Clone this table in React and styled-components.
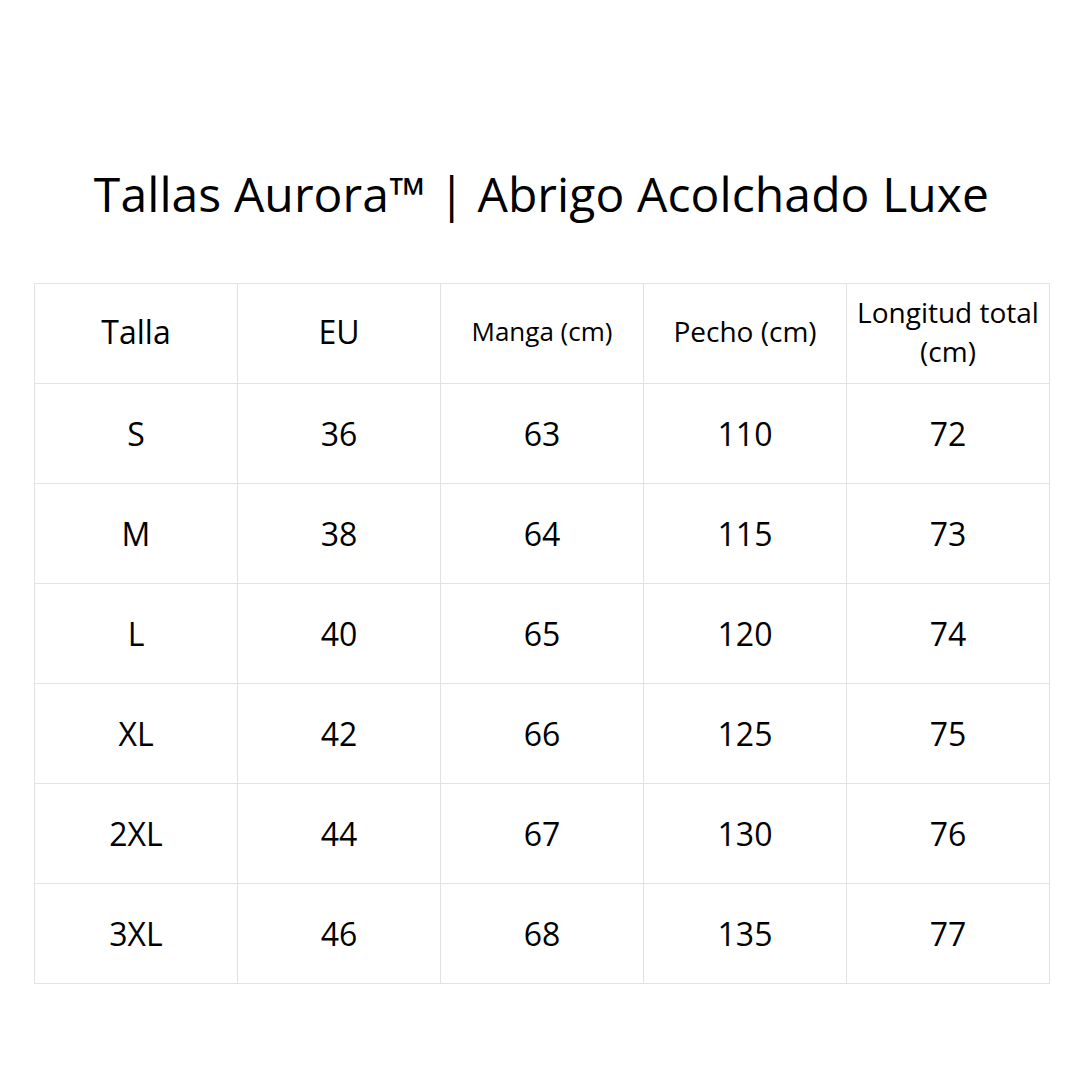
import styled, { createGlobalStyle } from "styled-components";

const Global = createGlobalStyle`
  body {
    margin: 0;
    background: #ffffff;
    font-family: "Open Sans", "Liberation Sans", sans-serif;
    color: #000000;
  }
`;

const Page = styled.div`
  width: 1080px;
  height: 1080px;
  display: flex;
  flex-direction: column;
  align-items: center;
  padding-top: 161px;
  padding-left: 3px;
  box-sizing: border-box;
`;

const Title = styled.h1`
  margin: 0;
  font-size: 48px;
  font-weight: 400;
  line-height: 65px;
  letter-spacing: 0.1px;
`;

const Table = styled.table`
  margin-top: 57px;
  margin-left: 1px;
  border-collapse: collapse;
  table-layout: fixed;
  width: 1016px;
`;

const Cell = styled.td`
  width: 203px;
  height: 100px;
  padding: 0 4px;
  box-sizing: border-box;
  border: 1px solid #e2e2e2;
  text-align: center;
  vertical-align: middle;
  font-size: ${(p) => p.$size || 32}px;
  font-weight: 400;
  line-height: 1.36;
`;

const HeadCell = styled(Cell).attrs({ as: "th" })`
  padding-bottom: 4px;
`;

const headers = [
  { label: "Talla", size: 32 },
  { label: "EU", size: 32 },
  { label: "Manga (cm)", size: 26 },
  { label: "Pecho (cm)", size: 28 },
  { label: "Longitud total (cm)", size: 28 },
];

const rows = [
  ["S", 36, 63, 110, 72],
  ["M", 38, 64, 115, 73],
  ["L", 40, 65, 120, 74],
  ["XL", 42, 66, 125, 75],
  ["2XL", 44, 67, 130, 76],
  ["3XL", 46, 68, 135, 77],
];

export default function App() {
  return (
    <>
      <Global />
      <Page>
        <Title>Tallas Aurora™ | Abrigo Acolchado Luxe</Title>
        <Table>
          <thead>
            <tr>
              {headers.map((h) => (
                <HeadCell key={h.label} $size={h.size}>
                  {h.label}
                </HeadCell>
              ))}
            </tr>
          </thead>
          <tbody>
            {rows.map((row) => (
              <tr key={row[0]}>
                {row.map((v, i) => (
                  <Cell key={i}>{v}</Cell>
                ))}
              </tr>
            ))}
          </tbody>
        </Table>
      </Page>
    </>
  );
}
